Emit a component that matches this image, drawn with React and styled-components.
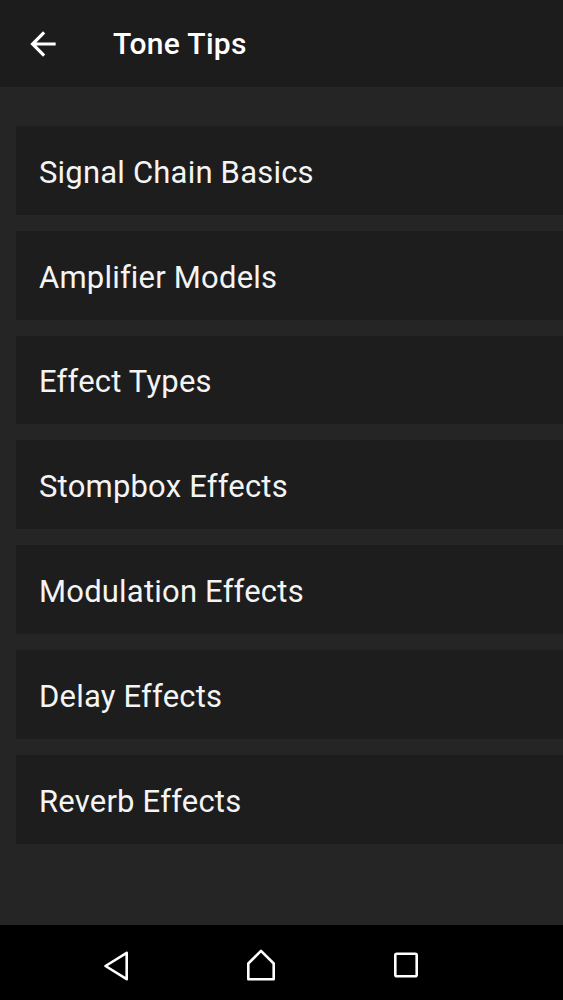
import React from "react";
import styled, { createGlobalStyle } from "styled-components";

const GlobalStyle = createGlobalStyle`
  html, body {
    margin: 0;
    padding: 0;
    background: #252525;
  }
  body {
    font-family: Roboto, "Noto Sans", "Liberation Sans", sans-serif;
    color: #ffffff;
  }
`;

const Screen = styled.div`
  width: 563px;
  height: 1000px;
  display: flex;
  flex-direction: column;
  overflow: hidden;
  background: #252525;
`;

const Toolbar = styled.header`
  height: 87px;
  flex-shrink: 0;
  display: flex;
  align-items: center;
  background: #1c1c1c;
`;

const BackButton = styled.button`
  width: 38px;
  height: 38px;
  margin-left: 24px;
  padding: 0;
  border: none;
  background: transparent;
  display: flex;
  align-items: center;
  justify-content: center;
  color: #ffffff;
`;

const Title = styled.h1`
  margin: 0 0 0 51px;
  font-size: 30px;
  font-weight: 500;
  letter-spacing: 0.3px;
  color: #ffffff;
`;

const List = styled.main`
  flex: 1;
  padding: 39px 0 0 16px;
  display: flex;
  flex-direction: column;
  gap: 16px;
`;

const Card = styled.div`
  height: 88.8px;
  width: 580px;
  flex-shrink: 0;
  display: flex;
  align-items: center;
  padding: 4px 0 0 23px;
  background: #1d1d1d;
  box-sizing: border-box;
  font-size: 31px;
  font-weight: 400;
  color: #f4f4f4;
  letter-spacing: 0.2px;
`;

const NavBar = styled.nav`
  height: 75px;
  flex-shrink: 0;
  background: #000000;
  display: flex;
  align-items: center;
  gap: 105px;
  padding-left: 96px;
`;

const NavIcon = styled.svg`
  width: 40px;
  height: 40px;
  display: block;
  fill: none;
  stroke: #ffffff;
  stroke-width: 2.6;
  stroke-linejoin: round;
`;

const items = [
  "Signal Chain Basics",
  "Amplifier Models",
  "Effect Types",
  "Stompbox Effects",
  "Modulation Effects",
  "Delay Effects",
  "Reverb Effects",
];

const App = () => {
  return (
    <Screen>
      <GlobalStyle />
      <Toolbar>
        <BackButton aria-label="back">
          <svg width="38" height="38" viewBox="0 0 24 24" fill="#ffffff">
            <path d="M20 11H7.83l5.59-5.59L12 4l-8 8 8 8 1.41-1.41L7.83 13H20v-2z" />
          </svg>
        </BackButton>
        <Title>Tone Tips</Title>
      </Toolbar>
      <List>
        {items.map((item) => (
          <Card key={item}>{item}</Card>
        ))}
      </List>
      <NavBar>
        <NavIcon viewBox="0 0 40 40">
          <path d="M30.7 9.8 L9.5 23 L30.7 36.2 Z" />
        </NavIcon>
        <NavIcon viewBox="0 0 40 40">
          <path d="M7.3 36.2 V20.5 L20 7.8 L32.7 20.5 V36.2 Z" />
        </NavIcon>
        <NavIcon viewBox="0 0 40 40">
          <rect x="9.3" y="10.8" width="21.4" height="22.4" rx="1.5" />
        </NavIcon>
      </NavBar>
    </Screen>
  );
};

export default App;
